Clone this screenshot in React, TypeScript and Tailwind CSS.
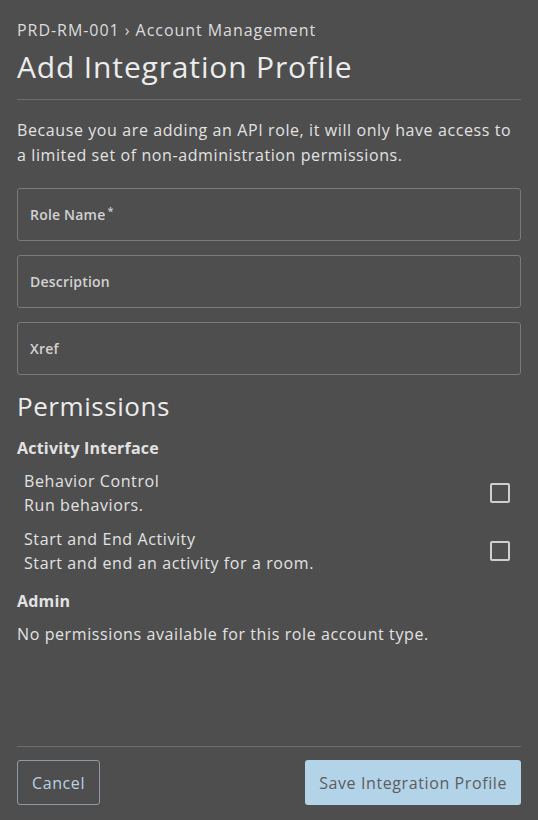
import { useState } from 'react';

const permissionGroups = [
  {
    name: 'Activity Interface',
    items: [
      { title: 'Behavior Control', description: 'Run behaviors.' },
      { title: 'Start and End Activity', description: 'Start and end an activity for a room.' },
    ],
  },
  { name: 'Admin', items: [] as { title: string; description: string }[] },
];

function Field({ label, required }: { label: string; required?: boolean }) {
  return (
    <div className="h-[53px] rounded-[3px] border border-[#7a7a7a] px-3 flex items-center">
      <span className="text-[14px] font-semibold tracking-[0.2px] text-[#d2d2d2]">
        {label}
        {required && <sup className="ml-[2px] text-[11px]">*</sup>}
      </span>
    </div>
  );
}

export default function App() {
  const [checked, setChecked] = useState<Record<string, boolean>>({});

  return (
    <div
      className="min-h-screen bg-[#4e4e4e] text-[#e2e2e2] px-[17px] flex flex-col tracking-[0.6px]"
      style={{ fontFamily: '"Open Sans", "Liberation Sans", sans-serif' }}
    >
      <div className="pt-[19px]">
        <div className="text-[16px] leading-[22px] tracking-[0.95px] text-[#dcdcdc]">PRD-RM-001 › Account Management</div>
        <h1 className="mt-[7px] text-[30px] leading-[38px] tracking-[0.85px] text-[#ececec]">Add Integration Profile</h1>
        <div className="mt-[13px] border-b border-[#6c6c6c]" />
      </div>

      <p className="mt-[18px] text-[16px] leading-[25px]">
        Because you are adding an API role, it will only have access to a limited set of non-administration
        permissions.
      </p>

      <div className="mt-[20px] flex flex-col gap-[14px]">
        <Field label="Role Name" required />
        <Field label="Description" />
        <Field label="Xref" />
      </div>

      <h2 className="mt-[14px] text-[26px] leading-[34px] tracking-[0.55px] text-[#ececec]">Permissions</h2>

      <div className="flex flex-col gap-[14px] mt-[13px]">
        {permissionGroups.map((group) => (
          <div key={group.name}>
            <h3 className="text-[16px] font-bold leading-[24px] tracking-[0.2px]">{group.name}</h3>
            {group.items.length === 0 ? (
              <p className="mt-[9px] text-[16px] leading-[24px]">No permissions available for this role account type.</p>
            ) : (
              <div className="mt-[9px] flex flex-col gap-[10px]">
                {group.items.map((item) => (
                  <label key={item.title} className="pl-[7px] flex items-center justify-between cursor-pointer">
                    <div className="text-[16px] leading-[24px]">
                      <div>{item.title}</div>
                      <div>{item.description}</div>
                    </div>
                    <input
                      type="checkbox"
                      checked={!!checked[item.title]}
                      onChange={(e) => setChecked({ ...checked, [item.title]: e.target.checked })}
                      className="appearance-none mr-[11px] w-5 h-5 rounded-[2px] border-2 border-[#cfcfcf] checked:bg-[#b3d3e8]"
                    />
                  </label>
                ))}
              </div>
            )}
          </div>
        ))}
      </div>

      <div className="flex-1" />

      <div className="border-t border-[#6c6c6c] pt-[13px] pb-[15px] flex justify-between">
        <button className="h-[45px] px-[14px] rounded-[3px] border border-[#8e9ba6] text-[16px] text-[#bcd3e4]">
          Cancel
        </button>
        <button className="h-[45px] px-[14px] rounded-[3px] bg-[#b3d3e8] text-[16px] text-[#5b5d60]">
          Save Integration Profile
        </button>
      </div>
    </div>
  );
}
